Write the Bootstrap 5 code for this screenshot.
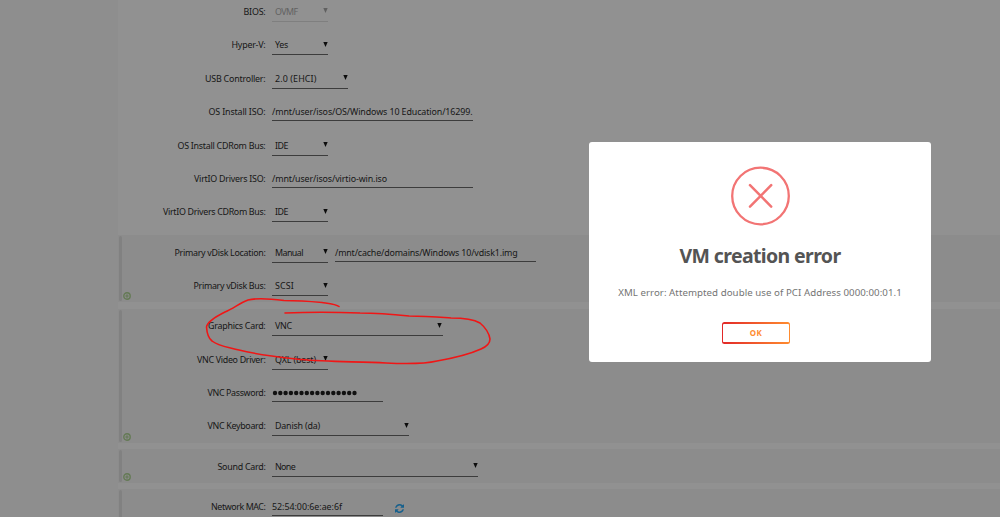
<!DOCTYPE html>
<html lang="en">
<head>
  <meta charset="UTF-8">
  <meta name="viewport" content="width=device-width, initial-scale=1">
  <title>Add VM</title>
  <link href="https://cdn.jsdelivr.net/npm/bootstrap@5.3.0/dist/css/bootstrap.min.css" rel="stylesheet">
  <style>
    body {
      background-color: #8e8e8e;
      color: #161616;
      font-family: "Noto Sans", "Open Sans", sans-serif;
      font-size: 8.9px;
      line-height: 12px;
      height: 517px;
    }
    .vm-form {
      margin-left: 118px;
      height: 517px;
      background-color: #919191;
    }
    .vm-section {
      margin-bottom: 6.7px;
      position: relative;
    }
    .vm-section.first {
      margin-top: -5.5px;
    }
    .vm-section.shaded {
      background-color: #8c8c8c;
    }
    .vm-section.shaded::before {
      content: "";
      position: absolute;
      left: .5px;
      top: 1px;
      bottom: 1px;
      width: 3.7px;
      border-radius: 2px;
      background-color: #818181;
    }
    .add-device {
      position: absolute;
      left: 5px;
      bottom: 2px;
    }
    .vm-row {
      height: 33.45px;
      padding-top: 1.3px;
    }
    .vm-label {
      width: 147.5px;
      margin-right: 6.5px;
    }
    .vm-select, .vm-input {
      height: 20px;
      padding-top: 4px;
      border-bottom: 1px solid #3c3c3c;
    }
    .vm-select {
      padding-left: 3px;
    }
    .vm-select svg {
      margin: 2.5px .5px 0 0;
    }
    .vm-input {
      height: 19px;
      padding-top: 4px;
      margin-bottom: 1px;
    }
    .vm-select.off {
      color: #626262;
      border-color: #7f7f7f;
    }
    .vm-fields {
      gap: 7px;
    }
    .fit {
      display: inline-block;
      white-space: nowrap;
    }
    .scribble {
      position: absolute;
      left: 0;
      top: 0;
      pointer-events: none;
    }
    .error-box {
      position: absolute;
      left: 589px;
      top: 142px;
      width: 342px;
      height: 220px;
      border-radius: 3px;
      padding-top: 24px;
    }
    .error-box h2 {
      color: #545454;
      font-size: 19.5px;
      line-height: 24px;
      margin: 18px 0 0;
    }
    .error-box p {
      color: #747474;
      font-size: 9.7px;
      line-height: 14px;
      margin: 18px 0 0;
    }
    .ok-btn {
      width: 68px;
      height: 22px;
      margin: 21.5px 8px 0 0;
      border: 1.5px solid transparent;
      border-width: 2px 1px;
      border-radius: 2.5px;
      background: linear-gradient(#fff, #fff) padding-box, linear-gradient(90deg, #e22828, #ff8c2f) border-box;
      background-clip: padding-box, border-box;
      color: #ff8c2f;
      font-size: 8px;
      font-weight: 700;
      line-height: 12px;
    }
  </style>
</head>
<body class="overflow-hidden position-relative">
<main class="vm-form" id="vmForm"></main>

<svg class="scribble" width="1000" height="517" fill="none" stroke="#f01616" stroke-width="1.6" stroke-linecap="round" stroke-linejoin="round">
  <path d="M339 306.500C336 304 329 303.500 322 302.500C306 301 299 300.500 284 300.500C272 299 256 298 248 300C240 303 234 308 225 312C215 317 207 323 206.500 327C207 334 208 338 212 341C218 346 228 347 239 350C258 355 279 357 301 359.500C327 362 359 361.500 386 363C406 364 424 364 437 361C454 358 470 354 481 349C488 346 490 343 490 339C489 333 486 328 480 323C473 319 464 318 451 318C437 317 424 316 409 316C390 314 375 313 360 313C332 312 310 312 285 313"/>
</svg>

<div class="error-box bg-white d-flex flex-column align-items-center" role="alertdialog">
  <svg width="60" height="60" viewBox="0 0 60 60" fill="none" stroke="#f27474">
    <circle cx="30.500" cy="30" r="28.300" stroke-width="2.300"/>
    <path d="M20 19.200 41.200 40.600M41.200 19.200 20 40.600" stroke-width="2.500" stroke-linecap="round"/>
  </svg>
  <h2 class="fw-bold"><span class="fit" data-w="161">VM creation error</span></h2>
  <p><span class="fit" data-w="283.5">XML error: Attempted double use of PCI Address 0000:00:01.1</span></p>
  <button class="ok-btn p-0" type="button"><span class="fit" data-w="12.5">OK</span></button>
</div>

<script src="https://cdn.jsdelivr.net/npm/bootstrap@5.3.0/dist/js/bootstrap.bundle.min.js"></script>
<script>
// field: [type, text, text width, field width]
const sections = [
  { rows: [
    ['BIOS:', 22, ['off', 'OVMF', 22.5, 56]],
    ['Hyper-V:', 34, ['select', 'Yes', 13, 56]],
    ['USB Controller:', 60.5, ['select', '2.0 (EHCI)', 41.5, 76]],
    ['OS Install ISO:', 57, ['input', '/mnt/user/isos/OS/Windows 10 Education/16299.', 200.5, 201]],
    ['OS Install CDRom Bus:', 88, ['select', 'IDE', 13, 56]],
    ['VirtIO Drivers ISO:', 71.5, ['input', '/mnt/user/isos/virtio-win.iso', 115, 201]],
    ['VirtIO Drivers CDRom Bus:', 102.5, ['select', 'IDE', 13, 56]]
  ] },
  { shaded: true, rows: [
    ['Primary vDisk Location:', 91, ['select', 'Manual', 28, 56], ['input', '/mnt/cache/domains/Windows 10/vdisk1.img', 182.5, 200.5]],
    ['Primary vDisk Bus:', 72, ['select', 'SCSI', 19, 56]]
  ] },
  { shaded: true, rows: [
    ['Graphics Card:', 57.5, ['select', 'VNC', 17, 170.5]],
    ['VNC Video Driver:', 68.5, ['select', 'QXL (best)', 41, 56]],
    ['VNC Password:', 58, ['password', '', 0, 111]],
    ['VNC Keyboard:', 58, ['select', 'Danish (da)', 45, 137]]
  ] },
  { shaded: true, rows: [
    ['Sound Card:', 48, ['select', 'None', 20, 206]]
  ] },
  { shaded: true, rows: [
    ['Network MAC:', 54.5, ['input', '52:54:00:6e:ae:6f', 70, 111], ['refresh']]
  ] }
];

const plusIcon = `<svg class="add-device" width="8" height="8" viewBox="0 0 8 8" fill="none" stroke="#647a54">
  <circle cx="4" cy="4" r="3.200" stroke-width="1.400"/><path d="M4 2.300V5.700M2.300 4H5.700" stroke-width="1.100"/></svg>`;
const refreshIcon = `<svg width="9" height="9" viewBox="0 0 1536 1536" fill="#16608d" style="margin-left:5px;margin-top:3px">
  <path d="M1511 928q0 5-1 7-64 268-268 434.500T764 1536q-146 0-282.500-55T238 1324l-129 129q-19 19-45 19t-45-19-19-45V960q0-26 19-45t45-19h448q26 0 45 19t19 45-19 45l-137 137q71 66 161 102t187 36q134 0 250-65t186-179q11-17 53-117 8-23 30-23h192q13 0 22.500 9.500t9.500 22.500zM1536 128v448q0 26-19 45t-45 19h-448q-26 0-45-19t-19-45 19-45l138-138Q969 256 768 256q-134 0-250 65T332 500q-11 17-53 117-8 23-30 23H50q-13 0-22.500-9.500T18 608v-7q65-268 270-434.500T768 0q146 0 284 55.500T1297 212l130-129q19-19 45-19t45 19 19 45z"/></svg>`;

function renderField([type, text, textWidth, width]) {
  if (type === 'refresh') return refreshIcon;
  const label = `<span class="fit" data-w="${textWidth}">${text}</span>`;
  if (type === 'input') {
    return `<div class="vm-input" style="width:${width}px">${label}</div>`;
  }
  if (type === 'password') {
    let dots = '';
    for (let i = 0; i < 16; i++) dots += `<circle cx="${3 + i * 5.3}" cy="6" r="2.200"/>`;
    return `<div class="vm-input" style="width:${width}px"><svg class="d-block" width="90" height="11" fill="#111">${dots}</svg></div>`;
  }
  return `<div class="vm-select d-flex justify-content-between align-items-start ${type}" style="width:${width}px">${label}
    <svg width="5" height="6" fill="${type === 'off' ? '#606060' : '#0c0c0c'}"><path d="M.3 0H4.700L2.500 5z"/></svg></div>`;
}

document.getElementById('vmForm').innerHTML = sections.map((section, i) => `
  <section class="vm-section ${i === 0 ? 'first' : ''} ${section.shaded ? 'shaded' : ''}">
    ${section.rows.map(([label, labelWidth, ...fields]) => `
      <div class="vm-row d-flex align-items-center">
        <div class="vm-label text-end"><span class="fit" data-w="${labelWidth}">${label}</span></div>
        <div class="d-flex align-items-center vm-fields">${fields.map(renderField).join('')}</div>
      </div>`).join('')}
    ${i > 0 && i < 4 ? plusIcon : ''}
  </section>`).join('');

document.querySelectorAll('.fit').forEach(el => {
  const n = el.textContent.length;
  const gap = (el.dataset.w - el.getBoundingClientRect().width) / n;
  el.style.letterSpacing = gap.toFixed(3) + 'px';
});
</script>
</body>
</html>
